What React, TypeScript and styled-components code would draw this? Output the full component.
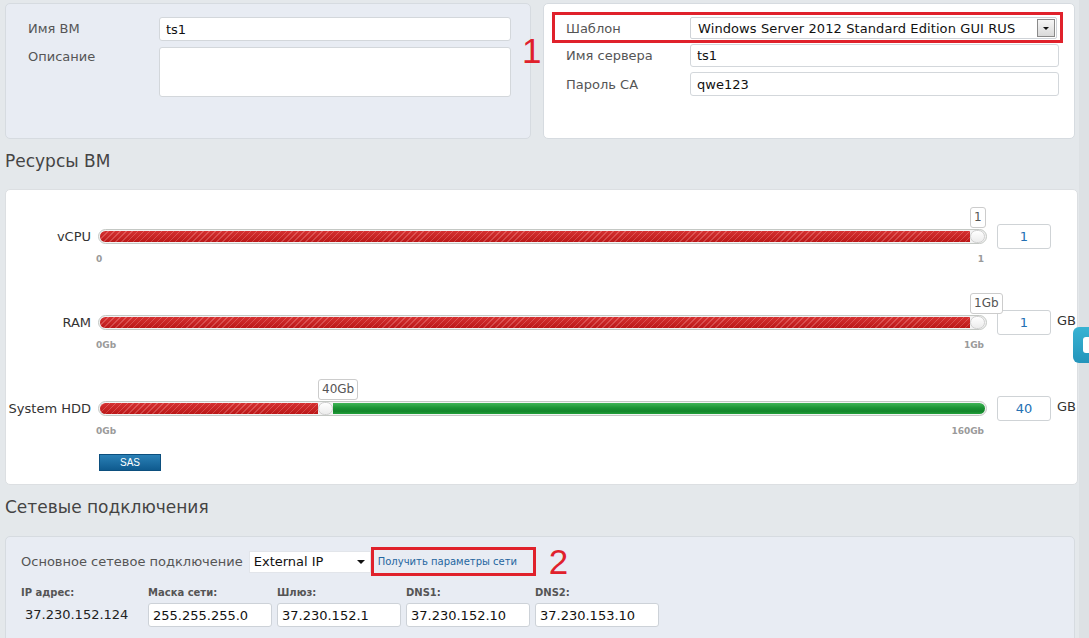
import React from "react";
import styled, { createGlobalStyle } from "styled-components";

const GlobalStyle = createGlobalStyle`
  html, body { margin: 0; padding: 0; background: #e4e8eb; }
  body { font-family: "DejaVu Sans", Verdana, sans-serif; color: #333; }
  * { box-sizing: border-box; }
`;

const Page = styled.div`
  position: relative;
  display: flex;
  width: 1089px;
  height: 638px;
  overflow: hidden;
`;

const Main = styled.main`
  flex: 1;
  min-width: 0;
  padding: 3px 1px 0 5px;
`;

const Rail = styled.div`
  width: 10px;
  background: #dde1e4;
`;

const SideTab = styled.div`
  position: absolute;
  right: 0;
  top: 327px;
  width: 16px;
  height: 36px;
  border-radius: 6px 0 0 6px;
  background: linear-gradient(to bottom, #38b3d3, #2495bb);
  display: flex;
  align-items: center;
  justify-content: flex-end;
`;

const SideTabGlyph = styled.span`
  width: 6px;
  height: 16px;
  border-radius: 3px 0 0 3px;
  background: #fff;
`;

const TopRow = styled.div`
  position: relative;
  display: grid;
  grid-template-columns: 526px 1fr;
  column-gap: 12px;
  height: 136px;
  margin-right: 3px;
`;

const Panel = styled.section<{ $tone: "blue" | "white" }>`
  background: ${(p) => (p.$tone === "blue" ? "#e8ecf3" : "#ffffff")};
  border: 1px solid #d6dbe0;
  border-radius: 5px;
`;

const LeftPanel = styled(Panel)`
  padding: 13px 19px 0 22px;
`;

const RightPanel = styled(Panel)`
  padding: 8px 15px 0 8px;
`;

const FieldGrid = styled.div`
  display: grid;
  grid-template-columns: 131px 1fr;
  row-gap: 6px;
  align-items: start;
`;

const FieldLabel = styled.label<{ $top?: number }>`
  font-size: 13px;
  line-height: 20px;
  padding-top: ${(p) => p.$top ?? 2}px;
  color: #555;
`;

const TextInput = styled.input<{ $h?: number }>`
  display: block;
  width: 100%;
  height: ${(p) => p.$h ?? 24}px;
  border: 1px solid #d3d7db;
  border-radius: 3px;
  background: #fff;
  padding: 0 6px;
  font-family: "DejaVu Sans", Verdana, sans-serif;
  font-size: 13px;
  color: #111;
  outline: none;
`;

const TextArea = styled.div`
  height: 50px;
  border: 1px solid #d3d7db;
  border-radius: 3px;
  background: #fff;
`;

const HighlightBox = styled.div`
  display: grid;
  grid-template-columns: 124px 1fr;
  align-items: center;
  margin-right: -4px;
  padding: 2px 3px 1px 11px;
  border: 3px solid #e0212b;
`;

const FormRow = styled.div<{ $gap: number }>`
  display: grid;
  grid-template-columns: 124px 1fr;
  align-items: center;
  padding-left: 14px;
  margin-top: ${(p) => p.$gap}px;
`;

const RowLabel = styled.span`
  font-size: 13px;
  color: #555;
`;

const SelectBox = styled.div`
  display: flex;
  align-items: center;
  height: 22px;
  border: 1px solid #cfd3d8;
  border-radius: 2px;
  background: #fff;
  padding: 0 1px 0 7px;
  font-size: 13px;
  letter-spacing: 0.1px;
  color: #111;
`;

const SelectText = styled.span`
  flex: 1;
  white-space: nowrap;
`;

const SelectButton = styled.span`
  display: flex;
  align-items: center;
  justify-content: center;
  width: 18px;
  height: 18px;
  border: 1px solid #8a8a8a;
  background: linear-gradient(to bottom, #f6f6f6, #d9d9d9);
`;

const Caret = styled.span<{ $size: number }>`
  width: 0;
  height: 0;
  border-left: ${(p) => p.$size}px solid transparent;
  border-right: ${(p) => p.$size}px solid transparent;
  border-top: ${(p) => p.$size}px solid #111;
`;

const Annotation = styled.span`
  font-family: "Liberation Sans", Arial, sans-serif;
  font-size: 35px;
  line-height: 1;
  color: #e0212b;
`;

const TopAnnotation = styled(Annotation)`
  position: absolute;
  left: 517px;
  top: 30px;
`;

const SectionTitle = styled.h2<{ $after: number }>`
  margin: 0 0 ${(p) => p.$after}px;
  padding-top: 11px;
  font-size: 17px;
  line-height: 22px;
  font-weight: normal;
  color: #444;
`;

const ResourcePanel = styled.section`
  background: #fff;
  border: 1px solid #dcdfe2;
  border-radius: 5px;
  padding: 34px 0 13px;
`;

const SliderBlock = styled.div`
  & + & {
    margin-top: 45px;
  }
`;

const SliderLine = styled.div`
  display: flex;
  align-items: center;
  height: 25px;
`;

const SliderLabel = styled.span`
  width: 85px;
  margin-right: 7px;
  text-align: right;
  font-size: 13px;
  color: #333;
`;

const Track = styled.div`
  position: relative;
  width: 889px;
  margin-right: 10px;
`;

const TrackBar = styled.div`
  display: flex;
  height: 15px;
  border: 1px solid #c4c8c4;
  border-radius: 8px;
  overflow: hidden;
  background: #f3f3f3;
  padding: 1px;
`;

const RedFill = styled.div`
  flex: none;
  height: 100%;
  border-radius: 6px 0 0 6px;
  background:
    linear-gradient(to bottom, rgba(255, 255, 255, 0.1), rgba(0, 0, 0, 0.1)),
    repeating-linear-gradient(
      -45deg,
      #d01a1a 0px,
      #d01a1a 3.2px,
      #e24848 3.2px,
      #e24848 4.2px
    );
`;

const GreenFill = styled.div`
  flex: 1;
  height: 100%;
  border-radius: 0 6px 6px 0;
  background: linear-gradient(to bottom, #40b556 0%, #1b9334 45%, #13852a 75%, #22a03b 100%);
`;

const Handle = styled.div`
  flex: none;
  width: 15px;
  height: calc(100% + 2px);
  margin: -1px 0;
  border-radius: 7px;
  border: 1px solid #cfcfcf;
  background: linear-gradient(to bottom, #ffffff, #ececec);
`;

const Tip = styled.div`
  position: absolute;
  bottom: calc(100% + 1px);
  height: 21px;
  padding: 0 3px;
  border: 1px solid #cccccc;
  border-radius: 3px;
  background: #fff;
  font-size: 12px;
  line-height: 19px;
  color: #555;
  white-space: nowrap;
`;

const ValueInput = styled.input`
  width: 54px;
  height: 25px;
  margin-right: 6px;
  border: 1px solid #cfd3d6;
  border-radius: 3px;
  background: #fff;
  text-align: center;
  font-family: "DejaVu Sans", Verdana, sans-serif;
  font-size: 13px;
  color: #2470b3;
  outline: none;
`;

const Unit = styled.span`
  font-size: 13px;
  color: #333;
  margin-top: -4px;
`;

const Scale = styled.div`
  display: flex;
  justify-content: space-between;
  width: 888px;
  margin: 5px 0 0 90px;
  font-size: 9px;
  line-height: 11px;
  font-weight: bold;
  color: #9a9a9a;
`;

const SasButton = styled.button`
  display: block;
  width: 62px;
  height: 17px;
  margin: 17px 0 0 93px;
  padding: 0;
  border: 1px solid #0c4f7e;
  background: linear-gradient(to bottom, #2a80b6, #0f5b8f);
  color: #fff;
  font-family: "Liberation Sans", Arial, sans-serif;
  font-size: 10px;
  line-height: 15px;
`;

const NetPanel = styled.section`
  height: 140px;
  margin-right: 3px;
  padding: 10px 0 0 15px;
  background: #e8ecf3;
  border: 1px solid #d6dbe0;
  border-radius: 5px;
`;

const NetTopLine = styled.div`
  display: flex;
  align-items: center;
  height: 29px;
`;

const NetLabel = styled.span`
  font-size: 13px;
  color: #555;
  margin-right: 6px;
`;

const NetSelect = styled.div`
  display: flex;
  align-items: center;
  width: 122px;
  height: 22px;
  padding: 0 5px 0 4px;
  background: #fff;
  border: 1px solid #e2e5ea;
  font-size: 13px;
  color: #111;
`;

const LinkBox = styled.div`
  display: flex;
  align-items: center;
  width: 165px;
  height: 29px;
  padding-left: 4px;
  border: 3px solid #e0212b;
`;

const NetLink = styled.a`
  font-size: 10px;
  color: #2466a0;
  text-decoration: none;
  white-space: nowrap;
`;

const NetAnnotation = styled(Annotation)`
  margin-left: 13px;
`;

const NetGrid = styled.div`
  display: grid;
  grid-template-columns: 122px repeat(4, 124px);
  column-gap: 5px;
  row-gap: 4px;
  margin-top: 11px;
`;

const NetFieldLabel = styled.span`
  font-size: 10px;
  line-height: 12px;
  font-weight: bold;
  color: #555;
`;

const NetValue = styled.span`
  font-size: 13px;
  line-height: 24px;
  padding-left: 4px;
  color: #222;
`;

const NetInput = styled(TextInput)`
  padding: 0 4px;
  border-color: #cdd2d8;
`;

type SliderProps = {
  label: string;
  value: number;
  max: number;
  tip: string;
  min: string;
  maxLabel: string;
  unit?: string;
};

const TRACK_INNER = 885;
const HANDLE = 15;

function ResourceSlider({ label, value, max, tip, min, maxLabel, unit }: SliderProps) {
  const fill = Math.round((value / max) * (TRACK_INNER - HANDLE));
  return (
    <SliderBlock>
      <SliderLine>
        <SliderLabel>{label}</SliderLabel>
        <Track>
          <Tip style={{ left: fill + 2 }}>{tip}</Tip>
          <TrackBar>
            <RedFill style={{ width: fill }} />
            <Handle />
            <GreenFill />
          </TrackBar>
        </Track>
        <ValueInput readOnly value={String(value)} />
        {unit && <Unit>{unit}</Unit>}
      </SliderLine>
      <Scale>
        <span>{min}</span>
        <span>{maxLabel}</span>
      </Scale>
    </SliderBlock>
  );
}

const netFields = [
  { label: "Маска сети:", value: "255.255.255.0" },
  { label: "Шлюз:", value: "37.230.152.1" },
  { label: "DNS1:", value: "37.230.152.10" },
  { label: "DNS2:", value: "37.230.153.10" },
];

export default function App() {
  return (
    <>
      <GlobalStyle />
      <Page>
        <Main>
          <TopRow>
            <LeftPanel $tone="blue">
              <FieldGrid>
                <FieldLabel>Имя ВМ</FieldLabel>
                <TextInput readOnly value="ts1" />
                <FieldLabel $top={0}>Описание</FieldLabel>
                <TextArea />
              </FieldGrid>
            </LeftPanel>
            <RightPanel $tone="white">
              <HighlightBox>
                <RowLabel>Шаблон</RowLabel>
                <SelectBox>
                  <SelectText>Windows Server 2012 Standard Edition GUI RUS</SelectText>
                  <SelectButton>
                    <Caret $size={3} />
                  </SelectButton>
                </SelectBox>
              </HighlightBox>
              <FormRow $gap={1}>
                <RowLabel>Имя сервера</RowLabel>
                <TextInput $h={23} readOnly value="ts1" />
              </FormRow>
              <FormRow $gap={5}>
                <RowLabel>Пароль СА</RowLabel>
                <TextInput readOnly value="qwe123" />
              </FormRow>
            </RightPanel>
            <TopAnnotation>1</TopAnnotation>
          </TopRow>

          <SectionTitle $after={17}>Ресурсы ВМ</SectionTitle>
          <ResourcePanel>
            <ResourceSlider label="vCPU" value={1} max={1} tip="1" min="0" maxLabel="1" />
            <ResourceSlider label="RAM" value={1} max={1} tip="1Gb" min="0Gb" maxLabel="1Gb" unit="GB" />
            <ResourceSlider label="System HDD" value={40} max={160} tip="40Gb" min="0Gb" maxLabel="160Gb" unit="GB" />
            <SasButton>SAS</SasButton>
          </ResourcePanel>

          <SectionTitle $after={18}>Сетевые подключения</SectionTitle>
          <NetPanel>
            <NetTopLine>
              <NetLabel>Основное сетевое подключение</NetLabel>
              <NetSelect>
                <SelectText>External IP</SelectText>
                <Caret $size={4} />
              </NetSelect>
              <LinkBox>
                <NetLink href="#">Получить параметры сети</NetLink>
              </LinkBox>
              <NetAnnotation>2</NetAnnotation>
            </NetTopLine>
            <NetGrid>
              <NetFieldLabel>IP адрес:</NetFieldLabel>
              {netFields.map((f) => (
                <NetFieldLabel key={f.label}>{f.label}</NetFieldLabel>
              ))}
              <NetValue>37.230.152.124</NetValue>
              {netFields.map((f) => (
                <NetInput key={f.label} readOnly value={f.value} />
              ))}
            </NetGrid>
          </NetPanel>
        </Main>
        <Rail />
        <SideTab>
          <SideTabGlyph />
        </SideTab>
      </Page>
    </>
  );
}
